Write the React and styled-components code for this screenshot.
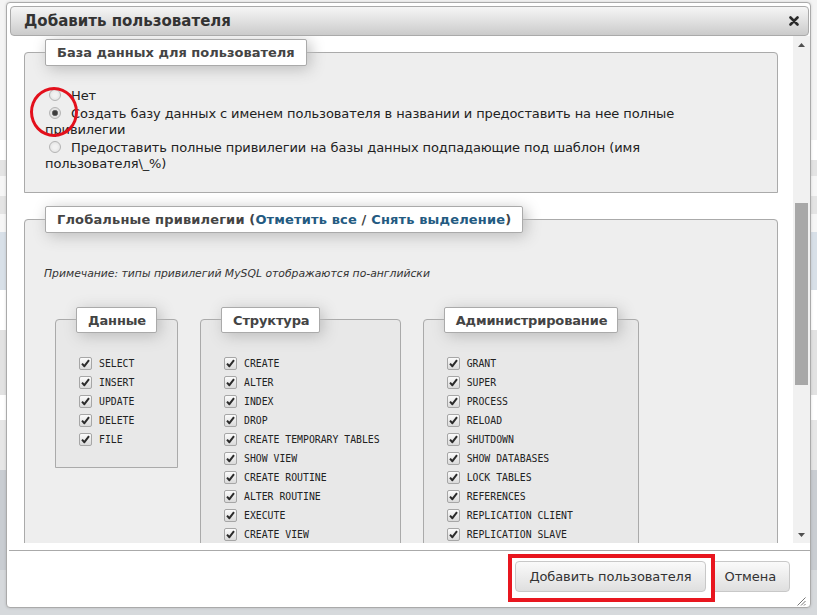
import React from 'react';
import styled, { createGlobalStyle } from 'styled-components';

const GlobalStyle = createGlobalStyle`
  html, body {
    margin: 0;
    padding: 0;
    background: #fff;
  }
  body {
    font-family: 'DejaVu Sans', Verdana, sans-serif;
  }
`;

const Page = styled.div`
  position: relative;
  width: 817px;
  height: 615px;
  overflow: hidden;
  background: linear-gradient(
    to bottom,
    #f4f4f4 0 140px,
    #ffffff 140px 160px,
    #e4e4e4 160px 176px,
    #f6f6f6 176px 196px,
    #e4e4e4 196px 214px,
    #f6f6f6 214px 232px,
    #d8e0e8 232px 290px,
    #ffffff 290px 330px,
    #e2e2e2 330px 395px,
    #ffffff 395px 420px,
    #e6e6e6 420px 470px,
    #c9cdd2 470px 570px,
    #d6d9dc 570px
  );
`;

const Dialog = styled.div`
  position: absolute;
  left: 6px;
  top: 2px;
  width: 805px;
  height: 606px;
  box-sizing: border-box;
  border: 1px solid #aaa;
  border-radius: 4px;
  background: #fff;
  display: flex;
  flex-direction: column;
  box-shadow: 0 0 3px rgba(0, 0, 0, 0.15);
`;

const TitleBar = styled.div`
  height: 30px;
  box-sizing: border-box;
  margin: 3px 1px 0 3px;
  padding: 0 9px 0 13px;
  border: 1px solid #aaa;
  border-radius: 4px;
  background: linear-gradient(to bottom, #f6f6f6, #cbcbcb);
  display: flex;
  align-items: center;
  justify-content: space-between;
`;

const Title = styled.span`
  font: bold 15px 'DejaVu Sans', Verdana, sans-serif;
  color: #333;
`;

const CloseButton = styled.span`
  display: flex;
  width: 10px;
  height: 10px;
  color: #2a2a2a;
`;

const Content = styled.div`
  height: 507px;
  display: flex;
`;

const Viewport = styled.div`
  flex: 1;
  overflow: hidden;
  padding: 3px 15px 0 17px;
`;

const Scrollbar = styled.div`
  width: 17px;
  background: #f1f1f1;
  display: flex;
  flex-direction: column;
`;

const ScrollArrow = styled.div`
  height: 17px;
  display: flex;
  align-items: center;
  justify-content: center;
  color: #505050;
`;

const ScrollTrack = styled.div`
  flex: 1;
`;

const ScrollThumb = styled.div`
  margin: 150px 2px 0 2px;
  height: 182px;
  background: #a8a8a8;
`;

const Fieldset = styled.fieldset`
  margin: 0 0 13px;
  padding: 22px 20px ${(p) => p.$bottom || 21}px;
  min-width: 0;
  border: 1px solid #aaa;
  border-radius: 4px 4px 0 0;
  background: #eee;
`;

const SubFieldset = styled.fieldset`
  margin: 0;
  padding: 21px 20px 18px;
  min-width: 0;
  border: 1px solid #aaa;
  border-radius: 4px 4px 0 0;
  background: #e8e8e8;
  flex: none;
`;

const Legend = styled.legend`
  padding: 5px 11px;
  border: 1px solid #aaa;
  border-radius: 2px;
  background: #fff;
  box-shadow: 3px 3px 15px #bbb;
  font: bold 13px/15px 'DejaVu Sans', Verdana, sans-serif;
  color: #444;
  letter-spacing: ${(p) => (p.$wide ? '0.15px' : '0')};
`;

const SubLegend = styled(Legend)`
  padding: 5px 10px 4px 11px;
  letter-spacing: -0.15px;
`;

const LegendLink = styled.a`
  color: #235a81;
  text-decoration: none;
`;

const RadioList = styled.div`
  font: 13px/16.5px 'DejaVu Sans', Verdana, sans-serif;
  letter-spacing: -0.1px;
  color: #222;
  max-width: 690px;
`;

const RadioItem = styled.div`
  margin-bottom: 1px;
`;

const RadioMark = styled.span`
  position: relative;
  display: inline-block;
  box-sizing: border-box;
  width: 12px;
  height: 12px;
  margin: 0 10px 0 4px;
  vertical-align: -1px;
  border: 1px solid #b4b4b4;
  border-radius: 50%;
  background: ${(p) =>
    p.$checked
      ? 'radial-gradient(circle, #3c3c3c 0 2px, #8a8a8a 3px, #e4e4e4 3.5px, #d6d6d6 100%)'
      : 'radial-gradient(circle, #f2f2f2 0 2px, #dcdcdc 100%)'};
`;

const Ring = styled.span`
  position: absolute;
  left: -20px;
  top: -21px;
  width: 48px;
  height: 50px;
  box-sizing: border-box;
  border: 3px solid #e3101c;
  border-radius: 50%;
  pointer-events: none;
`;

const Note = styled.div`
  margin-top: 12px;
  margin-left: -1px;
  font: italic 10.8px/14px 'DejaVu Sans', Verdana, sans-serif;
  color: #333;
`;

const Columns = styled.div`
  display: flex;
  align-items: flex-start;
  gap: 22px;
  margin: 26px 0 0 10px;
`;

const PrivList = styled.ul`
  list-style: none;
  margin: 0;
  padding: 0;
`;

const PrivItem = styled.li`
  height: 19px;
  display: flex;
  align-items: center;
  font: 9.8px 'DejaVu Sans Mono', 'Liberation Mono', monospace;
  color: #222;
  white-space: nowrap;
`;

const CheckBox = styled.span`
  display: flex;
  align-items: center;
  justify-content: center;
  box-sizing: border-box;
  width: 13px;
  height: 13px;
  margin: 0 7px 0 3px;
  border: 1px solid #a6a6a6;
  border-radius: 2px;
  background: linear-gradient(to bottom, #fbfbfb, #dadada);
  color: #2b2b2b;
`;

const Footer = styled.div`
  margin: 7px 0 0 2px;
  border-top: 1px solid #aaa;
  flex: 1;
  display: flex;
  justify-content: flex-end;
  align-items: flex-start;
  gap: 5px;
  padding: 10px 20px 0 0;
`;

const Button = styled.button`
  height: 31px;
  padding: 0 13px;
  border: 1px solid #c8c8c8;
  border-radius: 4px;
  background: linear-gradient(to bottom, #fafafa, #dfdfdf);
  font: 13px 'DejaVu Sans', Verdana, sans-serif;
  letter-spacing: -0.1px;
  color: #333;
`;

const Highlight = styled.span`
  position: relative;
  display: flex;
  &::after {
    content: '';
    position: absolute;
    left: -7px;
    top: -7px;
    right: -9px;
    bottom: -10px;
    border: 4px solid #e8161f;
    z-index: 2;
    pointer-events: none;
  }
`;

const Grip = styled.span`
  position: absolute;
  right: 4px;
  bottom: 1px;
  width: 10px;
  height: 10px;
  color: #777;
  display: flex;
`;

const Check = () => (
  <svg width="9" height="9" viewBox="0 0 9 9">
    <path d="M1 4.6 L3.4 7.2 L8 1.2" fill="none" stroke="currentColor" strokeWidth="2" strokeLinejoin="round" />
  </svg>
);

const Radio = ({ checked, circled }) => (
  <RadioMark $checked={checked}>{circled && <Ring />}</RadioMark>
);

const dbOptions = [
  { label: 'Нет' },
  {
    label:
      'Создать базу данных с именем пользователя в названии и предоставить на нее полные привилегии',
    checked: true,
    circled: true,
  },
  {
    label:
      'Предоставить полные привилегии на базы данных подпадающие под шаблон (имя пользователя\\_%)',
  },
];

const groups = [
  { title: 'Данные', items: ['SELECT', 'INSERT', 'UPDATE', 'DELETE', 'FILE'] },
  {
    title: 'Структура',
    items: [
      'CREATE',
      'ALTER',
      'INDEX',
      'DROP',
      'CREATE TEMPORARY TABLES',
      'SHOW VIEW',
      'CREATE ROUTINE',
      'ALTER ROUTINE',
      'EXECUTE',
      'CREATE VIEW',
    ],
  },
  {
    title: 'Администрирование',
    items: [
      'GRANT',
      'SUPER',
      'PROCESS',
      'RELOAD',
      'SHUTDOWN',
      'SHOW DATABASES',
      'LOCK TABLES',
      'REFERENCES',
      'REPLICATION CLIENT',
      'REPLICATION SLAVE',
    ],
  },
];

const App = () => (
  <Page>
    <GlobalStyle />
    <Dialog>
      <TitleBar>
        <Title>Добавить пользователя</Title>
        <CloseButton>
          <svg width="10" height="10" viewBox="0 0 10 10">
            <path d="M1.5 1.5 L8.5 8.5 M8.5 1.5 L1.5 8.5" stroke="currentColor" strokeWidth="2.6" strokeLinecap="round" />
          </svg>
        </CloseButton>
      </TitleBar>
      <Content>
        <Viewport>
          <Fieldset $bottom={18}>
            <Legend>База данных для пользователя</Legend>
            <RadioList>
              {dbOptions.map((o) => (
                <RadioItem key={o.label}>
                  <Radio checked={o.checked} circled={o.circled} />
                  {o.label}
                </RadioItem>
              ))}
            </RadioList>
          </Fieldset>
          <Fieldset>
            <Legend $wide>
              Глобальные привилегии (<LegendLink>Отметить все</LegendLink> /{' '}
              <LegendLink>Снять выделение</LegendLink>)
            </Legend>
            <Note>Примечание: типы привилегий MySQL отображаются по-английски</Note>
            <Columns>
              {groups.map((g) => (
                <SubFieldset key={g.title}>
                  <SubLegend>{g.title}</SubLegend>
                  <PrivList>
                    {g.items.map((item) => (
                      <PrivItem key={item}>
                        <CheckBox>
                          <Check />
                        </CheckBox>
                        {item}
                      </PrivItem>
                    ))}
                  </PrivList>
                </SubFieldset>
              ))}
            </Columns>
          </Fieldset>
        </Viewport>
        <Scrollbar>
          <ScrollArrow>
            <svg width="7" height="4" viewBox="0 0 7 4">
              <path d="M0 4 L3.5 0 L7 4 Z" fill="currentColor" />
            </svg>
          </ScrollArrow>
          <ScrollTrack>
            <ScrollThumb />
          </ScrollTrack>
          <ScrollArrow>
            <svg width="7" height="4" viewBox="0 0 7 4">
              <path d="M0 0 L7 0 L3.5 4 Z" fill="currentColor" />
            </svg>
          </ScrollArrow>
        </Scrollbar>
      </Content>
      <Footer>
        <Highlight>
          <Button>Добавить пользователя</Button>
        </Highlight>
        <Button>Отмена</Button>
      </Footer>
      <Grip>
        <svg width="10" height="10" viewBox="0 0 10 10">
          <path d="M9.5 1.5 L1.5 9.5 M9.5 5 L5 9.5 M9.5 8 L8 9.5" stroke="currentColor" strokeWidth="1" />
        </svg>
      </Grip>
    </Dialog>
  </Page>
);

export default App;
